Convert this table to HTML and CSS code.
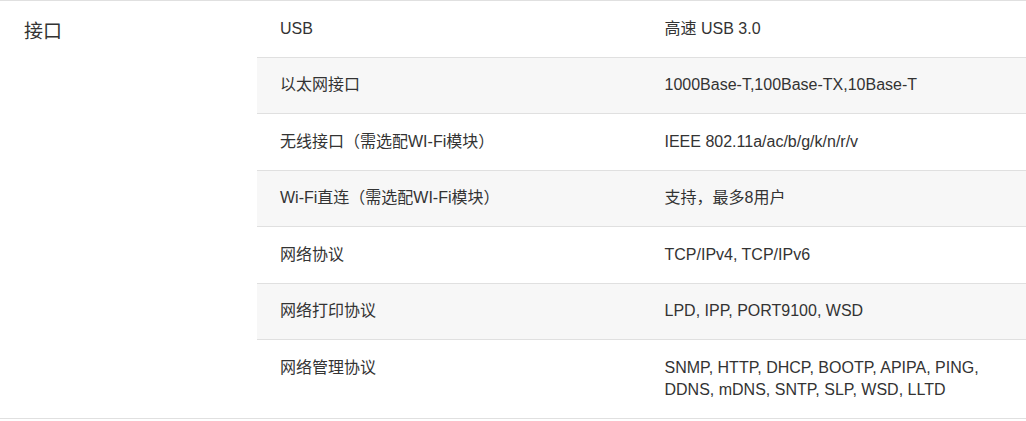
FILE: index.html
```html
<!DOCTYPE html>
<html lang="zh-CN">
<head>
<meta charset="utf-8">
<link rel="stylesheet" href="styles.css">
</head>
<body>
<div class="spec">
  <div class="spec-title">接口</div>
  <div class="spec-table">
    <div class="row"><div class="cell">USB</div><div class="cell">高速 USB 3.0</div></div>
    <div class="row"><div class="cell">以太网接口</div><div class="cell">1000Base-T,100Base-TX,10Base-T</div></div>
    <div class="row"><div class="cell">无线接口（需选配WI-Fi模块）</div><div class="cell">IEEE 802.11a/ac/b/g/k/n/r/v</div></div>
    <div class="row"><div class="cell">Wi-Fi直连（需选配WI-Fi模块）</div><div class="cell">支持，最多8用户</div></div>
    <div class="row"><div class="cell">网络协议</div><div class="cell">TCP/IPv4, TCP/IPv6</div></div>
    <div class="row"><div class="cell">网络打印协议</div><div class="cell">LPD, IPP, PORT9100, WSD</div></div>
    <div class="row last"><div class="cell">网络管理协议</div><div class="cell">SNMP, HTTP, DHCP, BOOTP, APIPA, PING,<br>DDNS, mDNS, SNTP, SLP, WSD, LLTD</div></div>
  </div>
</div>
</body>
</html>
```

FILE: styles.css
```css
html, body {
  margin: 0;
  padding: 0;
  background: #fff;
}
body {
  font-family: "Liberation Sans", Arial, "Noto Sans CJK SC", sans-serif;
  color: #333;
}
.spec {
  display: flex;
  border-top: 1px solid #e0e0e0;
  border-bottom: 1px solid #e0e0e0;
  width: 1026px;
}
.spec-title {
  width: 257px;
  flex: none;
  box-sizing: border-box;
  padding: 17px 0 0 24px;
  font-size: 19px;
  line-height: 27px;
  color: #333;
}
.spec-table {
  flex: 1;
  display: flex;
  flex-direction: column;
}
.row {
  display: grid;
  grid-template-columns: 1fr 1fr;
  border-bottom: 1px solid #e0e0e0;
}
.row:nth-child(even) {
  background: #f7f7f7;
}
.row.last {
  border-bottom: none;
}
.cell {
  padding: 16.5px 23px;
  font-size: 16px;
  line-height: 22.5px;
}
```
